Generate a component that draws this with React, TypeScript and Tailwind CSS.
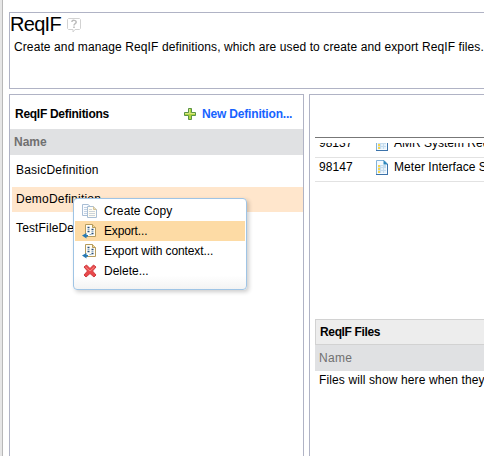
import React from 'react';

function SheetIcon() {
  return (
    <svg width="12" height="15" viewBox="0 0 12 15" className="block shrink-0">
      <path d="M.5 .5H8L11.5 4V14.5H.5Z" fill="#f4faff" stroke="#83b2d8" />
      <path d="M7.5 0L12 4.5H7.5Z" fill="#2c87bd" />
      <path d="M11.5 4V14.5M0 14.5H12" stroke="#3b72aa" />
      <path d="M2 5H10V13H2Z" fill="#c5dcee" />
      <path d="M2 5H4V7H2ZM2 8H4V10H2ZM2 11H4V13H2Z" fill="#f7d54a" />
      <path d="M5 6H7V7H5ZM5 8H7V10H5ZM8 8H10V10H8ZM5 11H7V13H5ZM8 11H10V13H8Z" fill="#e6f2fb" />
    </svg>
  );
}

function CopyIcon() {
  return (
    <svg width="16" height="16" viewBox="0 0 16 16" className="block">
      <path d="M.5 1.5H6L9.5 4.5V12.5H.5Z" fill="#fafcff" stroke="#a9bed5" />
      <path d="M2 4.5H5M2 6.5H5M2 8.5H5M2 10.5H5" stroke="#c3d2e3" />
      <path d="M5.5 3.5H11.5L14.5 6.5V14.5H5.5Z" fill="#fffdf4" stroke="#a9bed5" />
      <path d="M11.5 3.5V6.5H14.5" fill="#f2dfae" stroke="#d2c29c" />
      <path d="M7 6.5H10M7 8.5H13M7 10.5H13M7 12.5H13" stroke="#cbd3d9" />
    </svg>
  );
}

function ExportIcon() {
  return (
    <svg width="16" height="16" viewBox="0 0 16 16" className="block">
      <path d="M3.5 1.5H10.5L13.5 4.5V13.5H3.5Z" fill="#fffdf4" stroke="#b69b5c" />
      <path d="M10.5 1.5V4.5H13.5" fill="#f4d891" stroke="#b69b5c" />
      <path d="M5.5 4.5H7.5M5.5 8.5H7.5M9.5 6.5H11.5M9.5 10.5H11.5" stroke="#274d7d" strokeWidth="1.4" />
      <path d="M5.5 6.5H7.5M9.5 8.5H11.5M7.5 11.5H9.5" stroke="#8faecb" />
      <path d="M0 12.5L4.5 10V12H6V13.5H4.5V15.5Z" fill="#2679b5" />
    </svg>
  );
}

function DeleteIcon() {
  return (
    <svg width="16" height="16" viewBox="0 0 16 16" className="block">
      <path d="M2 4L4.5 2L8 5.5L11.5 2L14 4L10.5 8L14 12L12 14L8 10.5L4 14L2 12L5.5 8Z" fill="#e9484a" stroke="#cf3a3f" strokeLinejoin="round" />
      <path d="M3.5 4L8 8L12.5 4" fill="none" stroke="#f58c88" />
    </svg>
  );
}

const menuItems = [
  { label: 'Create Copy', icon: <CopyIcon />, tracking: 'tracking-[0.1px]' },
  { label: 'Export...', icon: <ExportIcon />, active: true, tracking: 'tracking-[-0.15px]' },
  { label: 'Export with context...', icon: <ExportIcon />, tracking: 'tracking-[-0.1px]' },
  { label: 'Delete...', icon: <DeleteIcon />, tracking: 'tracking-normal' },
];

function ContextMenu() {
  return (
    <div className="absolute left-[73px] top-[198px] h-[92px] w-[174px] rounded-[4px] border border-[#9fc4e5] bg-linear-to-b from-white from-85% to-[#f3f3f3] px-px pt-[2px] shadow-[2px_2px_4px_rgba(0,0,0,0.2)]">
      {menuItems.map((item) => (
        <div key={item.label} className={`flex h-5 items-center pl-[7px] ${item.active ? 'bg-[#fddba5]' : ''}`}>
          {item.icon}
          <span className={`ml-[6px] ${item.tracking}`}>{item.label}</span>
        </div>
      ))}
    </div>
  );
}

export default function App() {
  return (
    <div className="relative flex h-[456px] w-[484px] overflow-hidden bg-white font-['Liberation_Sans',Arial,sans-serif] text-[12px] leading-[14px] whitespace-nowrap text-black">
      <div className="w-[3px] shrink-0 border-r border-[#b8b8b8] bg-[#e6e6e6]" />
      <div className="flex min-w-0 flex-1 flex-col pl-[6px] pt-3">
        <header className="h-[77px] shrink-0 border-y border-l border-[#b0b3c5]">
          <div className="flex h-[24px] items-start">
            <h1 className="w-[57px] text-[20px] leading-[23px] tracking-[-0.7px]">ReqIF</h1>
            <svg width="14" height="15" viewBox="0 0 14 15" className="mt-[5px]">
              <path d="M1.5.5H12.5L13.5 1.5V10.5L12.5 11.5H8L6 14V11.5H1.5L.5 10.5V1.5Z" fill="#fff" stroke="#d2d2d2" />
              <path d="M4.8 4C5 1.8 9.2 1.8 9.2 4.2C9.2 5.7 7 5.5 7 7.4" fill="none" stroke="#bcbcbc" strokeWidth="1.5" />
              <path d="M6.2 8.5H7.8V10H6.2Z" fill="#bcbcbc" />
            </svg>
          </div>
          <p className="pl-[4px] pt-[3px] tracking-[0.105px]">Create and manage ReqIF definitions, which are used to create and export ReqIF files.</p>
        </header>

        <main className="mt-[5px] flex min-h-0 flex-1 gap-[5px]">
          <section className="w-[295px] shrink-0 border-x border-t border-[#b0b3c5]">
            <div className="flex h-[34px] items-center pl-[5px] pt-[4px] font-bold">
              <h2 className="w-[169px] tracking-[-0.28px]">ReqIF Definitions</h2>
              <svg width="12" height="12" viewBox="0 0 12 12" className="shrink-0">
                <path d="M4.5.5H7.5V4.5H11.5V7.5H7.5V11.5H4.5V7.5H.5V4.5H4.5Z" fill="#b1d440" stroke="#5a9444" />
                <path d="M5.5 1V5.5H1M6 5.5H11" fill="none" stroke="#d8e982" />
              </svg>
              <a className="ml-[6px] tracking-[-0.18px] text-[#1763ff]">New Definition...</a>
            </div>
            <div className="flex h-[26px] items-center bg-[#e0e1e3] pl-[4px] font-bold text-[#707070]">Name</div>
            <div className="flex h-[32px] items-center pb-[2px] pl-[6px] tracking-[0.22px]">BasicDefinition</div>
            <div className="ml-[2px] flex h-[25px] items-center bg-[#ffe6cc] pb-[2px] pl-[4px] tracking-[0.22px]">DemoDefinition</div>
            <div className="flex h-[33px] items-center pb-[2px] pl-[6px] tracking-[0.15px]">TestFileDefinition</div>
          </section>

          <section className="min-w-0 flex-1 border-l border-t border-[#b0b3c5] pl-[5px]">
            <div className="h-[43px] border-b border-[#777]" />
            <div className="h-[181px] pt-[5px]">
              <div className="flex h-[15px] items-end overflow-hidden border-b border-[#e2e2e2]">
                <div className="flex h-[24px] shrink-0 items-center pb-[4px] pl-[4px]">
                  <span className="w-[57px]">98137</span><SheetIcon /><span className="ml-[6px]">AMR System Requirements</span>
                </div>
              </div>
              <div className="flex h-[24px] items-center overflow-hidden border-b border-[#e2e2e2] pb-[5px] pl-[4px]">
                <span className="w-[57px] shrink-0 tracking-[0.1px]">98147</span><SheetIcon /><span className="ml-[6px] tracking-[0.05px]">Meter Interface Specification</span>
              </div>
            </div>
            <h2 className="flex h-[26px] items-center border-y border-l border-[#d2d2d2] bg-[#ededed] pb-[1px] pl-[4px] font-bold tracking-[-0.35px]">ReqIF Files</h2>
            <div className="flex h-[26px] items-center bg-[#e0e1e3] pb-[1px] pl-[4px] tracking-[0.3px] text-[#707070]">Name</div>
            <p className="pl-[4px] pt-[2px] tracking-[0.12px]">Files will show here when they are available.</p>
          </section>
        </main>
      </div>
      <ContextMenu />
    </div>
  );
}
